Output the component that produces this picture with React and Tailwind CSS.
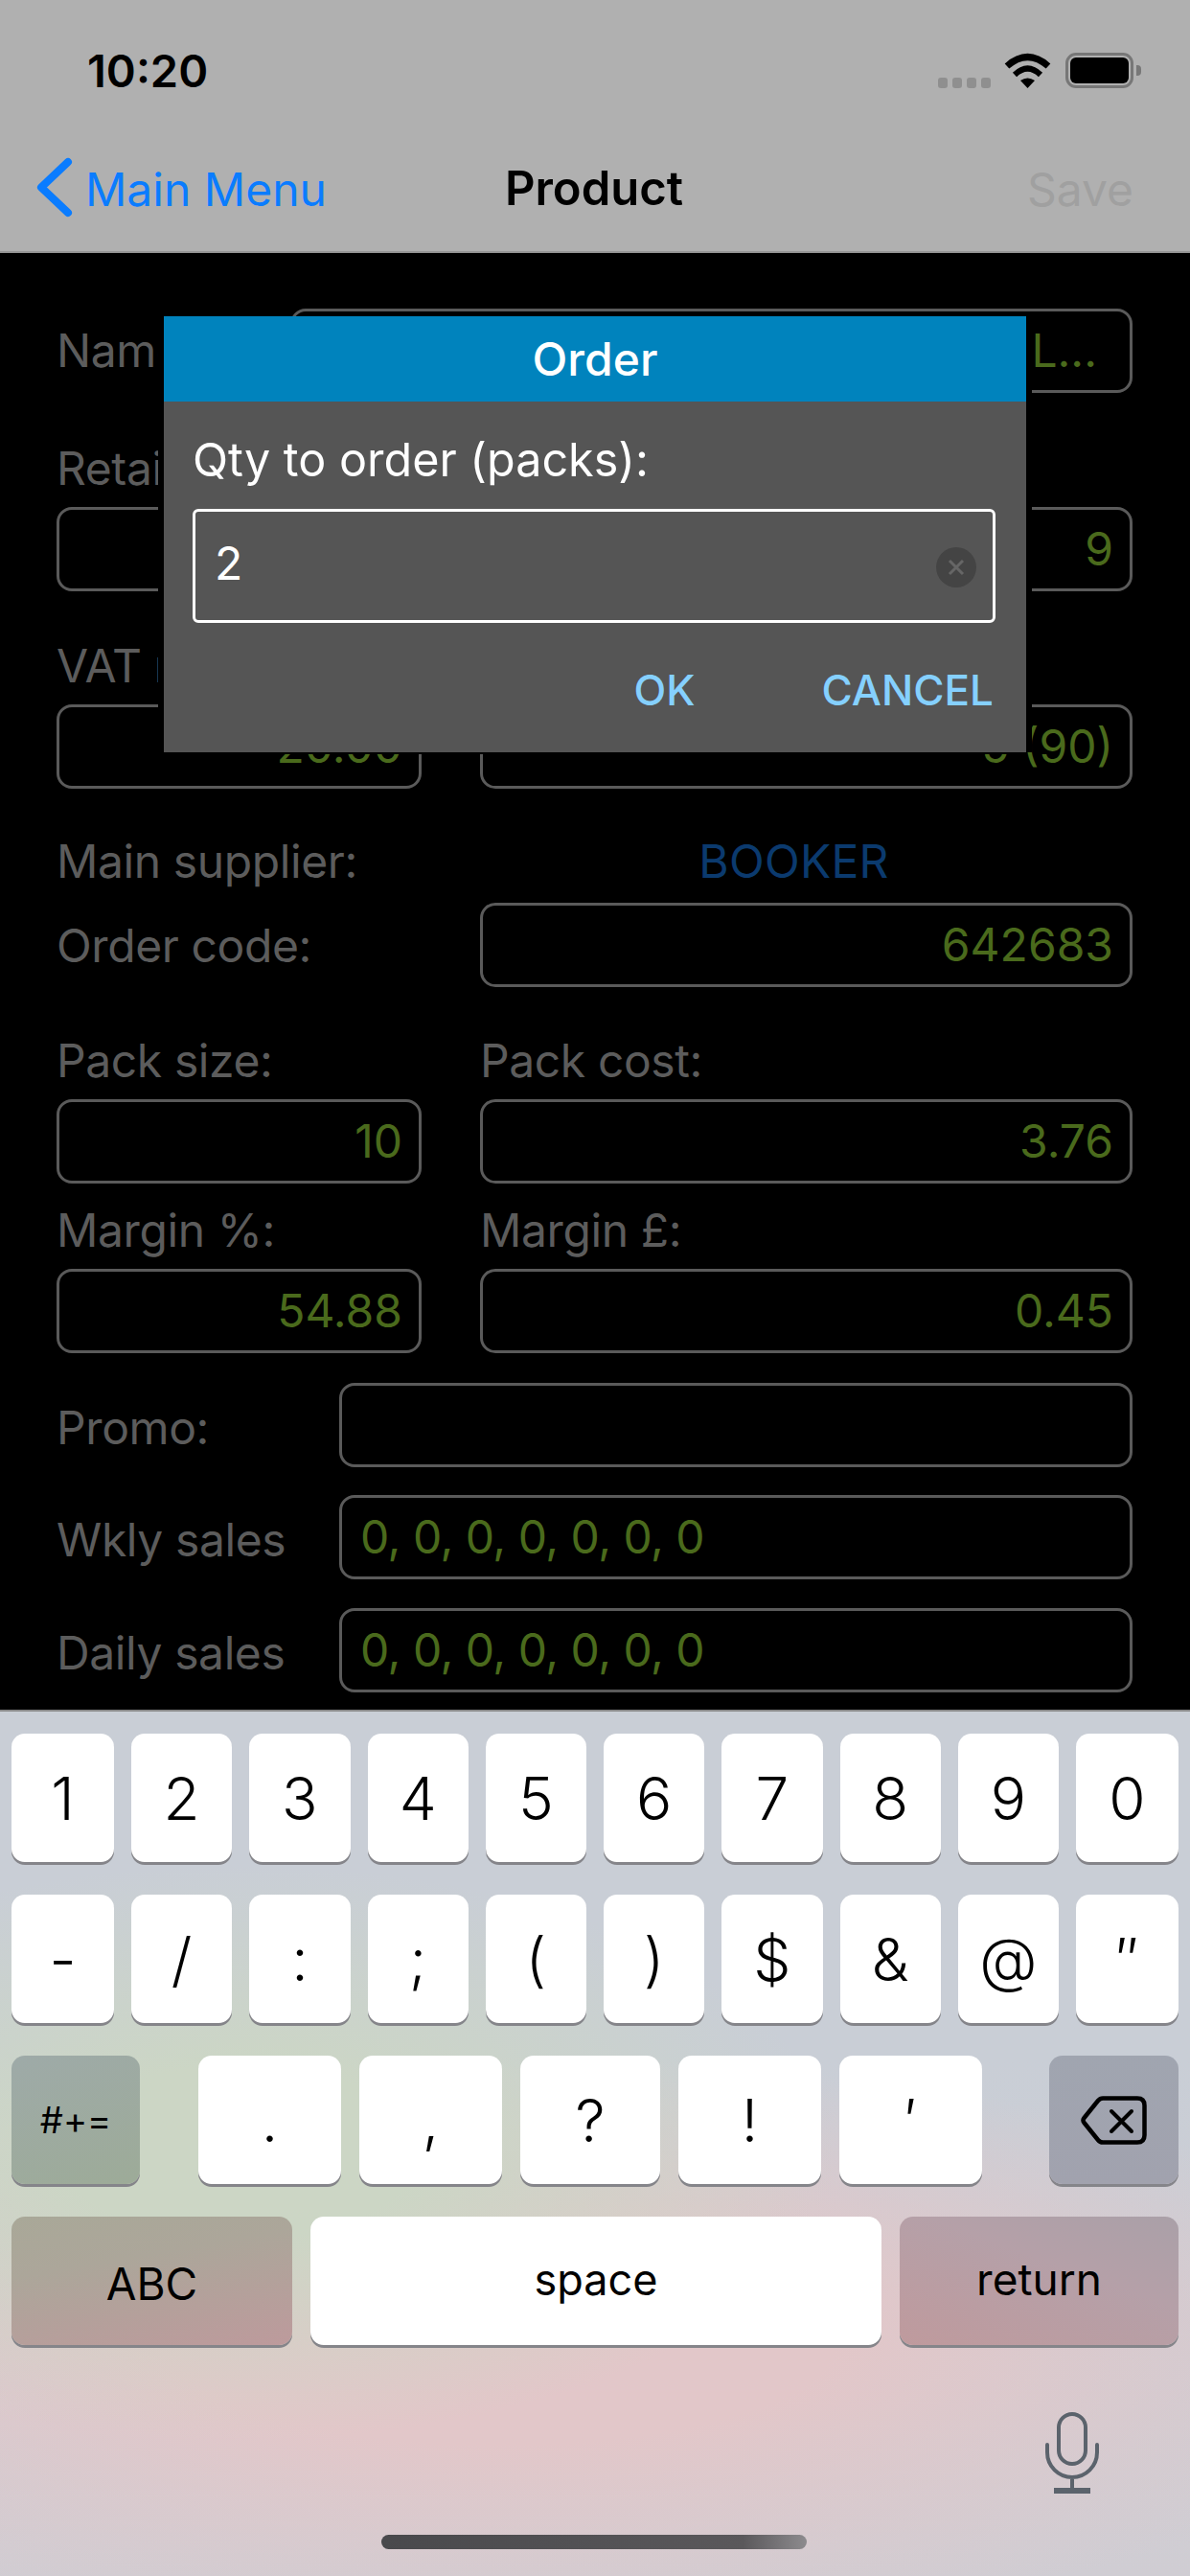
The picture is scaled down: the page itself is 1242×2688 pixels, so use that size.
const row1 = ["1", "2", "3", "4", "5", "6", "7", "8", "9", "0"];
const row2 = ["-", "/", ":", ";", "(", ")", "$", "&", "@", "″"];
const row3 = [
  { label: ".", width: "w-[149px]" },
  { label: ",", width: "w-[149px]" },
  { label: "?", width: "w-[146px]" },
  { label: "!", width: "w-[149px]" },
  { label: "′", width: "w-[149px]" },
];

const StatusBar = () => (
  <div className="h-[132px] bg-[#b0b0b0] flex justify-between">
    <div className="pl-[91px] pt-[50px] text-[47px] leading-[48px] font-semibold text-black">
      10:20
    </div>
    <div className="pt-[55px] pr-[51px] flex items-start">
      <div className="flex gap-[5px] mt-[26px] mr-[14px]">
        {[0, 1, 2, 3].map((i) => (
          <span key={i} className="w-[10px] h-[11px] rounded-[3px] bg-[#8f8f8f]"></span>
        ))}
      </div>
      <svg width="49" height="37" viewBox="0 0 49 37" className="mr-[15px]">
        <path d="M3 14Q24.5 -5 46 14" fill="none" stroke="#000" strokeWidth="7" />
        <path d="M11 23Q24.5 10 38 23" fill="none" stroke="#000" strokeWidth="6" />
        <path d="M17 29Q24.5 24 32 29L24.5 37Z" fill="#000" />
      </svg>
      <div className="w-[71px] h-[37px] rounded-[11px] border-[3px] border-[#777] p-[2px]">
        <div className="w-full h-full rounded-[6px] bg-black"></div>
      </div>
      <div className="w-[5px] h-[11px] mt-[13px] ml-[3px] rounded-r-[4px] bg-[#777]"></div>
    </div>
  </div>
);

const NavBar = () => (
  <div className="h-[132px] bg-[#b0b0b0] border-b-2 border-[#969696] flex items-center relative">
    <div className="flex items-center pl-[38px] -mt-[4px]">
      <svg width="38" height="63" viewBox="0 0 38 63">
        <path
          d="M33 5L5 31.5L33 58"
          fill="none"
          stroke="#0a7cff"
          strokeWidth="8"
          strokeLinecap="round"
          strokeLinejoin="round"
        />
      </svg>
      <span className="ml-[13px] mt-[5px] text-[48px] leading-[48px] text-[#0a7cff]">Main Menu</span>
    </div>
    <span className="absolute left-[512px] top-[41px] w-[216px] text-center text-[49px] leading-[48px] font-semibold text-black">
      Product
    </span>
    <span className="ml-auto pr-[59px] mt-[2px] text-[48px] leading-[48px] text-[#a0a0a0]">Save</span>
  </div>
);

const Label = ({ children, className = "" }) => (
  <div className={`h-[48px] text-[48px] leading-[48px] tracking-[-0.4px] text-[#5c5c5c] whitespace-nowrap ${className}`}>
    {children}
  </div>
);

const Field = ({ value, left, className = "" }) => (
  <div
    className={`h-[88px] rounded-[16px] border-[3px] border-[#5a5a5a] flex items-center text-[48px] leading-[48px] text-[#4a6a1c] ${
      left ? "justify-start pl-[19px] pr-[18px] tracking-[-0.5px]" : "justify-end pl-[18px] pr-[17px]"
    } ${className}`}
  >
    {value}
  </div>
);

const FieldPair = ({ leftLabel, rightLabel, leftValue, rightValue, className = "" }) => (
  <div className={`flex gap-[61px] ${className}`}>
    <div className="w-[381px]">
      <Label className="pt-[2px] mb-[18px]">{leftLabel}</Label>
      <Field value={leftValue} />
    </div>
    <div className="flex-1">
      <Label className="pt-[2px] mb-[18px]">{rightLabel}</Label>
      <Field value={rightValue} />
    </div>
  </div>
);

const SideField = ({ label, value, className = "" }) => (
  <div className={`flex items-center ${className}`}>
    <Label className="w-[295px] mt-[6px]">{label}</Label>
    <Field value={value} left className="flex-1" />
  </div>
);

const ProductForm = () => (
  <div className="flex-1 bg-black pt-[58px] pl-[59px] pr-[60px]">
    <div className="flex items-center">
      <Label className="w-[244px]">Name:</Label>
      <Field value="L..." className="flex-1 pr-[34px]" />
    </div>
    <FieldPair className="mt-[53px]" leftLabel="Retail" rightLabel="" leftValue="" rightValue="9" />
    <FieldPair className="mt-[52px]" leftLabel="VAT r" rightLabel="" leftValue="20.00" rightValue="5 (90)" />
    <div className="flex mt-[52px]">
      <Label className="w-[416px]">Main supplier:</Label>
      <div className="flex-1 text-center text-[48px] leading-[48px] tracking-[0.3px] text-[#0b3a6e]">BOOKER</div>
    </div>
    <div className="flex items-center mt-[19px]">
      <Label className="w-[442px] mt-[2px]">Order code:</Label>
      <Field value="642683" className="flex-1" />
    </div>
    <FieldPair
      className="mt-[51px]"
      leftLabel="Pack size:"
      rightLabel="Pack cost:"
      leftValue="10"
      rightValue="3.76"
    />
    <FieldPair
      className="mt-[23px]"
      leftLabel="Margin %:"
      rightLabel="Margin £:"
      leftValue="54.88"
      rightValue="0.45"
    />
    <SideField className="mt-[31px]" label="Promo:" value="" />
    <SideField className="mt-[29px]" label="Wkly sales" value="0, 0, 0, 0, 0, 0, 0" />
    <SideField className="mt-[30px]" label="Daily sales" value="0, 0, 0, 0, 0, 0, 0" />
  </div>
);

const Key = ({ children, className = "bg-white" }) => (
  <div
    className={`h-[134px] rounded-[14px] flex items-center justify-center text-black shadow-[0_3px_0_#85858a] ${className}`}
  >
    {children}
  </div>
);

const Keyboard = () => (
  <div className="h-[904px] border-t-2 border-[#8a8a8a] pt-[23px] bg-[radial-gradient(ellipse_620px_300px_at_250px_460px,#ccd6c5_30%,transparent),radial-gradient(ellipse_1000px_300px_at_520px_660px,#e2c7c9_35%,transparent),linear-gradient(#c9ced6,#c9ced6_40%,#d0cdd3)]">
    <div className="px-[12px] flex flex-col gap-[34px]">
      <div className="grid grid-cols-[107px_repeat(8,1fr)_107px] gap-x-[18px]">
        {row1.map((k) => (
          <Key key={k} className="bg-white text-[62px] font-light">
            {k}
          </Key>
        ))}
      </div>
      <div className="grid grid-cols-[107px_repeat(8,1fr)_107px] gap-x-[18px]">
        {row2.map((k) => (
          <Key key={k} className="bg-white text-[62px] font-light">
            {k}
          </Key>
        ))}
      </div>
      <div className="flex">
        <Key className="w-[134px] text-[38px] bg-[linear-gradient(160deg,#9eaaa8,#9dab98)]">#+=</Key>
        <div className="flex gap-[19px] ml-[61px]">
          {row3.map((k) => (
            <Key key={k.label} className={`${k.width} bg-white text-[62px] font-light`}>
              {k.label}
            </Key>
          ))}
        </div>
        <Key className="w-[135px] ml-auto bg-[linear-gradient(180deg,#a0a5b0,#a1a2ae)]">
          <svg width="69" height="51" viewBox="0 0 69 51">
            <path
              d="M23 2.5H59Q66.5 2.5 66.5 10V41Q66.5 48.500 59 48.500H23Q20 48.500 18 46L3.500 28Q1.500 25.500 3.500 23L18 5Q20 2.500 23 2.500Z"
              fill="none"
              stroke="#000"
              strokeWidth="4.500"
              strokeLinejoin="round"
            />
            <path d="M32 16L53 37M53 16L32 37" fill="none" stroke="#000" strokeWidth="4" strokeLinecap="round" />
          </svg>
        </Key>
      </div>
      <div className="flex gap-[19px]">
        <Key className="w-[293px] text-[46px] pt-[6px] bg-[linear-gradient(170deg,#a9a898,#aca69a_35%,#bd9a9c)]">
          ABC
        </Key>
        <Key className="flex-1 text-[45px] pb-[3px] bg-white">space</Key>
        <Key className="w-[291px] text-[46px] pb-[3px] bg-[linear-gradient(200deg,#aaa0a8,#b5a0a8_40%,#bf9a9d)]">
          return
        </Key>
      </div>
    </div>
    <div className="flex justify-end pr-[95px] mt-[70px]">
      <svg width="56" height="85" viewBox="0 0 56 85">
        <rect x="14" y="2" width="28" height="52" rx="14" fill="none" stroke="#5b636c" strokeWidth="4" />
        <path d="M2 34V42A26 26 0 0 0 54 42V34M28 68V80" fill="none" stroke="#5b636c" strokeWidth="4" strokeLinecap="round" />
        <path d="M9 82H47" fill="none" stroke="#5b636c" strokeWidth="6" />
      </svg>
    </div>
    <div className="mt-[43px] ml-[398px] w-[444px] h-[15px] rounded-full bg-[linear-gradient(90deg,#49494c,#5a585b_85%,#8d8b8e)]"></div>
  </div>
);

const OrderDialog = () => (
  <div className="absolute left-[171px] top-[330px] w-[900px] h-[455px] bg-[#555555] shadow-[-6px_0_0_#000,6px_0_0_#000,0_2px_0_#000]">
    <div className="h-[89px] bg-[#0083bd] flex items-center justify-center text-[48px] font-medium text-white">
      Order
    </div>
    <div className="pt-[37px] pl-[30px] pr-[32px]">
      <div className="h-[48px] text-[48.5px] leading-[48px] text-white">Qty to order (packs):</div>
      <div className="mt-[27px] h-[119px] rounded-[6px] border-[3px] border-white flex items-center justify-between pl-[20px] pr-[17px]">
        <span className="text-[48px] leading-[48px] text-white -mt-[6px]">2</span>
        <span className="w-[42px] h-[42px] mt-[2px] rounded-full bg-[#444444] flex items-center justify-center">
          <svg width="20" height="20" viewBox="0 0 20 20">
            <path d="M3 3L17 17M17 3L3 17" fill="none" stroke="#666666" strokeWidth="3" />
          </svg>
        </span>
      </div>
      <div className="mt-[46px] h-[48px] flex justify-end gap-[132px] pr-[2px] text-[44px] leading-[48px] font-medium text-[#85d0ff]">
        <span>OK</span>
        <span>CANCEL</span>
      </div>
    </div>
  </div>
);

const App = () => {
  return (
    <div className="relative w-[1242px] h-[2688px] flex flex-col overflow-hidden [font-family:Inter,sans-serif]">
      <StatusBar />
      <NavBar />
      <ProductForm />
      <Keyboard />
      <OrderDialog />
    </div>
  );
};

export default App;
